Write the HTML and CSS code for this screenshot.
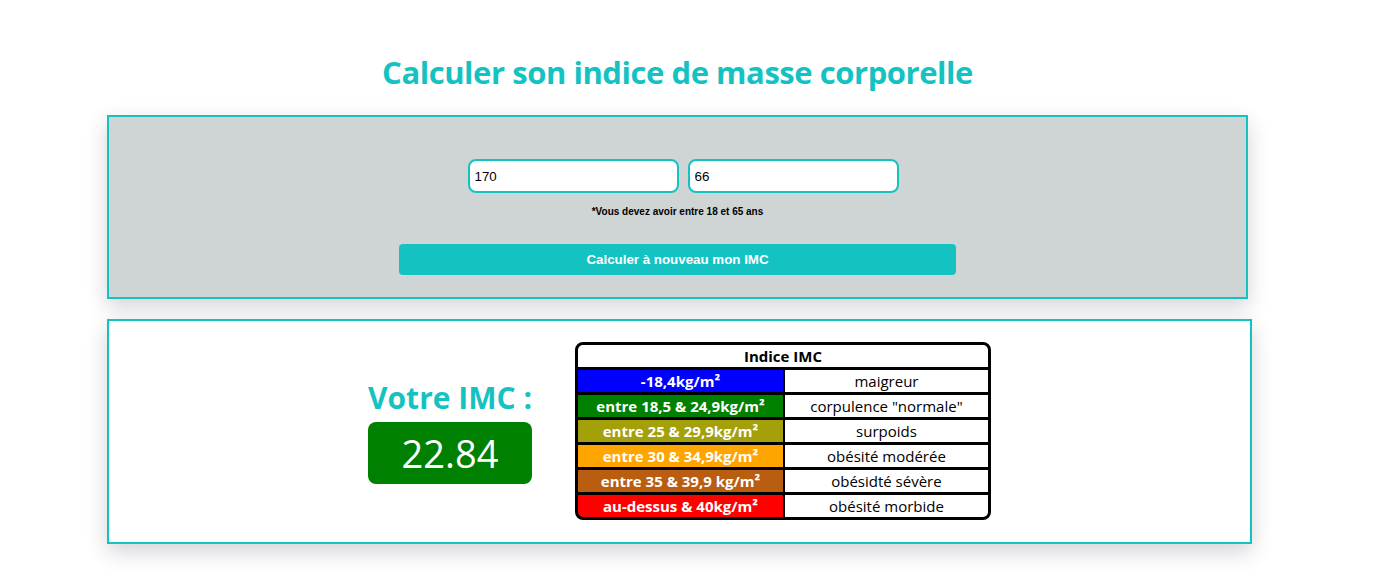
FILE: index.html
```html
<!DOCTYPE html>
<html lang="fr">
<head>
<meta charset="utf-8">
<title>Calculer son IMC</title>
<link rel="stylesheet" href="styles.css">
</head>
<body>
<main class="page">
  <h1 class="title">Calculer son indice de masse corporelle</h1>
  <section class="form-box">
    <div class="inputs">
      <input class="field" type="text" value="170">
      <input class="field" type="text" value="66">
    </div>
    <p class="note">*Vous devez avoir entre 18 et 65 ans</p>
    <button class="btn" type="button">Calculer à nouveau mon IMC</button>
  </section>
  <section class="result-box">
    <div class="result">
      <h2 class="result-title">Votre IMC :</h2>
      <div class="result-value">22.84</div>
    </div>
    <div class="imc-table">
      <div class="cell head">Indice IMC</div>
      <div class="cell range c-blue">-18,4kg/m²</div>
      <div class="cell label">maigreur</div>
      <div class="cell range c-green">entre 18,5 &amp; 24,9kg/m²</div>
      <div class="cell label">corpulence "normale"</div>
      <div class="cell range c-olive">entre 25 &amp; 29,9kg/m²</div>
      <div class="cell label">surpoids</div>
      <div class="cell range c-orange">entre 30 &amp; 34,9kg/m²</div>
      <div class="cell label">obésité modérée</div>
      <div class="cell range c-brown">entre 35 &amp; 39,9 kg/m²</div>
      <div class="cell label">obésidté sévère</div>
      <div class="cell range c-red">au-dessus &amp; 40kg/m²</div>
      <div class="cell label">obésité morbide</div>
    </div>
  </section>
</main>
</body>
</html>
```
FILE: styles.css
```css
body {
  margin: 0;
  background: #ffffff;
  font-family: "Open Sans", "Noto Sans", sans-serif;
}

.page {
  width: 1355px;
  padding-bottom: 40px;
}

.title {
  margin: 52px 0 23px;
  text-align: center;
  font-size: 31px;
  line-height: 40px;
  font-weight: 700;
  letter-spacing: -0.45px;
  color: #15c2c2;
}

.form-box {
  box-sizing: border-box;
  width: 1141px;
  margin: 0 0 0 107px;
  padding: 42px 0 22px;
  border: 2px solid #15c2c2;
  background: #cfd4d4;
  box-shadow: 0 8px 20px rgba(40, 40, 70, 0.2);
  display: flex;
  flex-direction: column;
  align-items: center;
}

.inputs {
  display: flex;
  gap: 9px;
  margin-left: 11px;
}

.field {
  box-sizing: border-box;
  width: 211px;
  height: 34px;
  padding: 0 5px;
  border: 2px solid #15c2c2;
  border-radius: 8px;
  background: #ffffff;
  font-family: "Liberation Sans", Arial, sans-serif;
  font-size: 13.333px;
  color: #000000;
  outline: none;
}

.note {
  margin: 13px 0 0;
  font-family: "Liberation Sans", Arial, sans-serif;
  font-size: 10px;
  line-height: 12px;
  font-weight: 700;
  color: #000000;
}

.btn {
  width: 557px;
  height: 31px;
  margin-top: 26px;
  border: 0;
  border-radius: 4px;
  background: #15c2c2;
  color: #ffffff;
  font-family: "Liberation Sans", Arial, sans-serif;
  font-size: 13.333px;
  font-weight: 700;
}

.result-box {
  box-sizing: border-box;
  width: 1145px;
  margin: 20px 0 0 107px;
  padding: 21px 0 22px;
  border: 2px solid #15c2c2;
  background: #ffffff;
  box-shadow: 0 8px 20px rgba(40, 40, 70, 0.2);
  display: flex;
  justify-content: center;
  align-items: center;
  gap: 43px;
}

.result {
  display: flex;
  flex-direction: column;
  align-items: stretch;
  margin-top: 2px;
}

.result-title {
  margin: 0;
  font-size: 30px;
  line-height: 36px;
  font-weight: 700;
  color: #15c2c2;
  white-space: nowrap;
}

.result-value {
  margin-top: 6px;
  height: 62px;
  border-radius: 8px;
  background: #008000;
  color: #ffffff;
  text-align: center;
  font-size: 38px;
  line-height: 62px;
  font-weight: 400;
}

.imc-table {
  box-sizing: border-box;
  width: 416px;
  border: 3px solid #000000;
  border-radius: 8px;
  overflow: hidden;
  background: #000000;
  display: grid;
  grid-template-columns: 205px 1fr;
  grid-auto-rows: 22px;
  column-gap: 2px;
  row-gap: 3px;
}

.cell {
  display: flex;
  align-items: center;
  justify-content: center;
  font-size: 15px;
  white-space: nowrap;
}

.head {
  grid-column: 1 / -1;
  background: #ffffff;
  font-weight: 700;
  color: #000000;
}

.range {
  color: #ffffff;
  font-weight: 700;
}

.label {
  background: #ffffff;
  color: #000000;
}

.c-blue { background: #0000ff; }
.c-green { background: #008000; }
.c-olive { background: #a3a009; }
.c-orange { background: #ffa500; }
.c-brown { background: #b95d10; }
.c-red { background: #ff0000; }
```
